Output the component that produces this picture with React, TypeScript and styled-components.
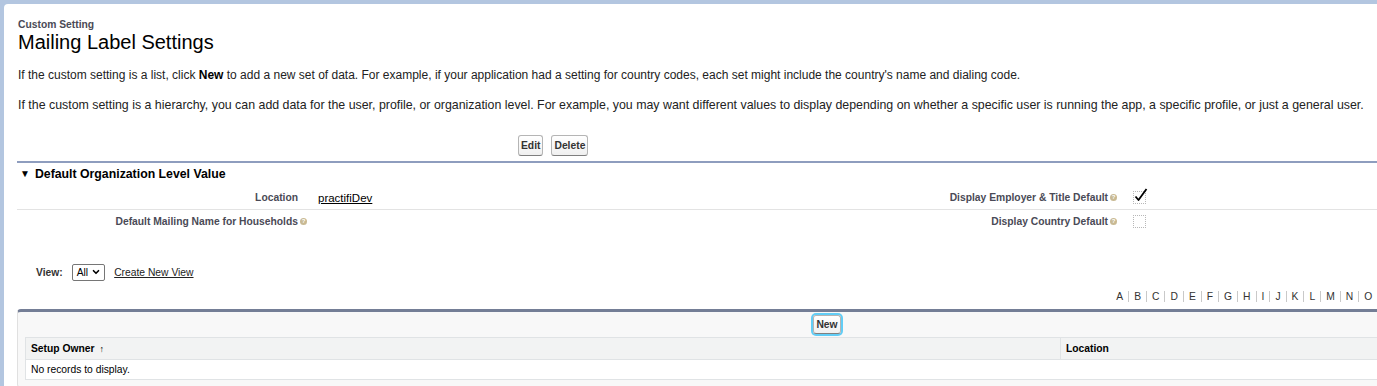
import React from 'react'
import styled, { createGlobalStyle } from 'styled-components'
import { ChevronDown } from 'lucide-react'

const GlobalStyle = createGlobalStyle`
  html, body {
    margin: 0;
    padding: 0;
    overflow: hidden;
  }
  body {
    background: #b3c6e0;
    font-family: "Liberation Sans", Arial, sans-serif;
    font-size: 12px;
    color: #222;
  }
`

const LETTERS = 'ABCDEFGHIJKLMNOPQRSTUVWXYZ'.split('').concat(['Other', 'All'])

const Page = styled.div`
  padding: 4px 0 0 4px;
  width: 1720px;
`

const Panel = styled.div`
  background: #fff;
  border-radius: 4px 0 0 0;
  padding: 13px 0 0 13px;
  min-height: 400px;
`

const Content = styled.div`
  width: 1620px;
`

const Eyebrow = styled.div`
  padding-left: 1px;
  margin-top: 1px;
  font-size: 10.3px;
  font-weight: bold;
  line-height: 13px;
  color: #4a4a56;
`

const Title = styled.h1`
  margin: -1px 0 0;
  padding-left: 1px;
  font-size: 20px;
  font-weight: normal;
  line-height: 24px;
  color: #000;
`

const Intro = styled.p<{ $gap: number; $size: number }>`
  margin: ${(p) => p.$gap}px 0 0;
  padding-left: 1px;
  font-size: ${(p) => p.$size}px;
  line-height: 16px;
  color: #222;
  white-space: nowrap;

  b {
    color: #000;
  }
`

const ButtonRow = styled.div`
  display: flex;
  gap: 8px;
  padding-left: 501px;
  margin-top: 22px;
`

const Button = styled.button<{ $focused?: boolean }>`
  height: 21px;
  padding: 0 2px;
  border: 1px solid #b5b5b5;
  border-bottom-color: #7f7f7f;
  border-radius: 3px;
  background: linear-gradient(#fff, #f0f0f0);
  font-family: inherit;
  font-size: 10.3px;
  font-weight: bold;
  color: #333;
  box-shadow: ${(p) => (p.$focused ? '0 0 0 2px #62cdf6' : 'none')};
`

const Section = styled.div`
  margin-top: 5px;
  border-top: 2px solid #8e9dbe;
`

const SectionHeader = styled.h3`
  display: flex;
  align-items: center;
  gap: 5px;
  margin: 3px 0 4px;
  padding-left: 3px;
  font-size: 12.3px;
  font-weight: bold;
  line-height: 16px;
  color: #000;
`

const Twisty = styled.span`
  font-size: 10px;
  line-height: 16px;
`

const DetailGrid = styled.div`
  display: grid;
  grid-template-columns: 291px 518px 292px 519px;
`

const Cell = styled.div<{ $label?: boolean; $last?: boolean }>`
  display: flex;
  align-items: center;
  justify-content: ${(p) => (p.$label ? 'flex-end' : 'flex-start')};
  height: 23px;
  padding: ${(p) => (p.$label ? '0 10px 0 0' : '0 0 0 10px')};
  border-bottom: ${(p) => (p.$last ? 'none' : '1px solid #e3e3e3')};
  font-size: ${(p) => (p.$label ? '10.3px' : '11.5px')};
  font-weight: ${(p) => (p.$label ? 'bold' : 'normal')};
  color: ${(p) => (p.$label ? '#4a4a56' : '#000')};
  white-space: nowrap;
`

const ValueLink = styled.a`
  color: #000;
  text-decoration: underline;
  font-size: 11.5px;
`

const HelpOrb = styled.span`
  display: inline-flex;
  align-items: center;
  justify-content: center;
  width: 7px;
  height: 7px;
  margin-left: 2px;
  margin-right: -9px;
  border-radius: 50%;
  background: #c8b993;
  color: #fff;
  font-size: 6px;
  font-weight: bold;
  line-height: 7px;
`

const CheckBox = styled.span`
  position: relative;
  display: inline-block;
  width: 11px;
  height: 11px;
  margin-left: 5px;
  border: 1px dotted #b8b8b8;
`

const CheckMark = styled.svg`
  position: absolute;
  left: 0;
  top: -4px;
  overflow: visible;
`

const ViewRow = styled.div`
  display: flex;
  align-items: center;
  gap: 9px;
  margin-top: 30px;
  padding-left: 19px;
  height: 18px;
`

const ViewLabel = styled.span`
  font-size: 10.3px;
  font-weight: bold;
  color: #333;
`

const SelectBox = styled.span`
  display: inline-flex;
  align-items: center;
  gap: 3px;
  height: 15px;
  padding: 0 3px 0 4px;
  border: 1px solid #767676;
  border-radius: 2px;
  font-size: 10.3px;
  color: #000;
`

const ViewLink = styled.a`
  font-size: 10.3px;
  color: #222;
  text-decoration: underline;
`

const AlphaBar = styled.div`
  display: flex;
  justify-content: flex-end;
  margin-top: 10px;
  line-height: 14px;
`

const Letter = styled.span`
  padding: 0 5px;
  font-size: 10.3px;
  color: #333;
  line-height: 11px;

  & + & {
    border-left: 1px solid #c9c9c9;
  }
`

const ListBlock = styled.div`
  margin-top: 7px;
  padding: 2px 7px 7px;
  border: 1px solid #e0e0e0;
  border-top: 3px solid #747e96;
  border-radius: 4px;
  background: #f8f8f8;
`

const ListButtons = styled.div`
  display: flex;
  justify-content: center;
  padding: 1px 0 3px;
`

const NewButton = styled(Button)`
  height: 19px;
`

const ListTable = styled.table`
  width: 100%;
  border-collapse: collapse;
  background: #fff;
  border: 1px solid #e0e3e5;
`

const HeadCell = styled.th<{ $w?: number }>`
  width: ${(p) => (p.$w ? `${p.$w}px` : 'auto')};
  height: 21px;
  padding: 0 5px;
  background: #f2f3f3;
  border: 1px solid #e0e3e5;
  text-align: left;
  font-size: 10.3px;
  font-weight: bold;
  color: #000;
`

const SortArrow = styled.span`
  margin-left: 5px;
  font-size: 9px;
  font-weight: normal;
`

const BodyCell = styled.td`
  height: 19px;
  padding: 0 5px;
  font-size: 10.3px;
  color: #000;
`

const Check = () => (
  <CheckMark width="14" height="14" viewBox="0 0 14 14">
    <path d="M1.5 8.5 L4.5 12 L12.5 1" fill="none" stroke="#000" strokeWidth="1.8" strokeLinejoin="round" />
  </CheckMark>
)

const App = () => (
  <>
    <GlobalStyle />
    <Page>
      <Panel>
        <Content>
          <Eyebrow>Custom Setting</Eyebrow>
          <Title>Mailing Label Settings</Title>
          <Intro $gap={13} $size={12}>
            If the custom setting is a list, click <b>New</b> to add a new set of data. For example, if your application
            had a setting for country codes, each set might include the country's name and dialing code.
          </Intro>
          <Intro $gap={14} $size={12.38}>
            If the custom setting is a hierarchy, you can add data for the user, profile, or organization level. For
            example, you may want different values to display depending on whether a specific user is running the app, a
            specific profile, or just a general user.
          </Intro>

          <ButtonRow>
            <Button>Edit</Button>
            <Button>Delete</Button>
          </ButtonRow>

          <Section>
            <SectionHeader>
              <Twisty>▼</Twisty>
              Default Organization Level Value
            </SectionHeader>
            <DetailGrid>
              <Cell $label>Location</Cell>
              <Cell>
                <ValueLink href="#">practifiDev</ValueLink>
              </Cell>
              <Cell $label>
                Display Employer &amp; Title Default<HelpOrb>?</HelpOrb>
              </Cell>
              <Cell>
                <CheckBox>
                  <Check />
                </CheckBox>
              </Cell>
              <Cell $label $last>
                Default Mailing Name for Households<HelpOrb>?</HelpOrb>
              </Cell>
              <Cell $last />
              <Cell $label $last>
                Display Country Default<HelpOrb>?</HelpOrb>
              </Cell>
              <Cell $last>
                <CheckBox />
              </Cell>
            </DetailGrid>
          </Section>

          <ViewRow>
            <ViewLabel>View:</ViewLabel>
            <SelectBox>
              All
              <ChevronDown size={10} strokeWidth={4} />
            </SelectBox>
            <ViewLink href="#">Create New View</ViewLink>
          </ViewRow>

          <AlphaBar>
            {LETTERS.map((l) => (
              <Letter key={l}>{l}</Letter>
            ))}
          </AlphaBar>

          <ListBlock>
            <ListButtons>
              <NewButton $focused>New</NewButton>
            </ListButtons>
            <ListTable>
              <thead>
                <tr>
                  <HeadCell $w={1024}>
                    Setup Owner<SortArrow>↑</SortArrow>
                  </HeadCell>
                  <HeadCell>Location</HeadCell>
                </tr>
              </thead>
              <tbody>
                <tr>
                  <BodyCell colSpan={2}>No records to display.</BodyCell>
                </tr>
              </tbody>
            </ListTable>
          </ListBlock>
        </Content>
      </Panel>
    </Page>
  </>
)

export default App
